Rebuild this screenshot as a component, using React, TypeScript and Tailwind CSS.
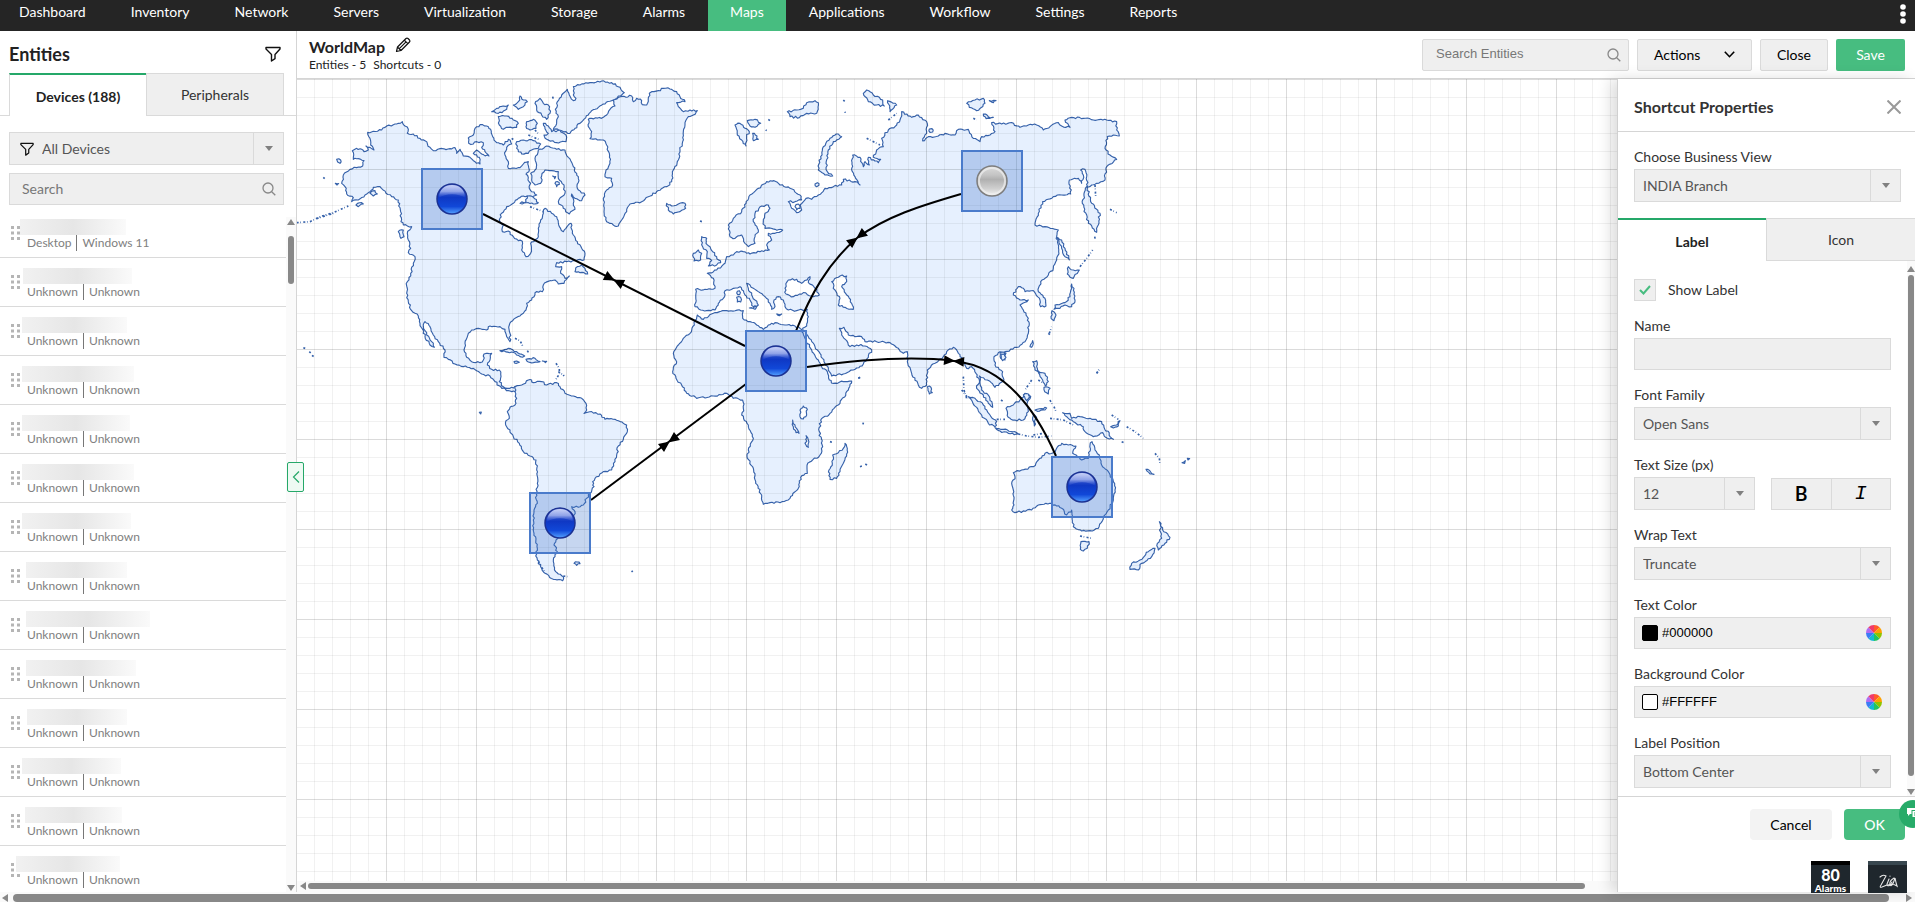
import type { ReactNode } from 'react'

type Point = [number, number]

const navItems = [
  'Dashboard',
  'Inventory',
  'Network',
  'Servers',
  'Virtualization',
  'Storage',
  'Alarms',
  'Maps',
  'Applications',
  'Workflow',
  'Settings',
  'Reports',
]

// names are masked, only the width of each mask differs
const devices = [
  { mask: 'w-[106px] ml-[-7px]', type: 'Desktop', os: 'Windows 11' },
  { mask: 'w-[109px] ml-[-4px]', type: 'Unknown', os: 'Unknown' },
  { mask: 'w-[105px] ml-[-5px]', type: 'Unknown', os: 'Unknown' },
  { mask: 'w-[112px] ml-[-5px]', type: 'Unknown', os: 'Unknown' },
  { mask: 'w-[108px] ml-[-5px]', type: 'Unknown', os: 'Unknown' },
  { mask: 'w-[112px] ml-[-5px]', type: 'Unknown', os: 'Unknown' },
  { mask: 'w-[109px] ml-[-5px]', type: 'Unknown', os: 'Unknown' },
  { mask: 'w-[101px] ml-[-1px]', type: 'Unknown', os: 'Unknown' },
  { mask: 'w-[124px] ml-[-1px]', type: 'Unknown', os: 'Unknown' },
  { mask: 'w-[110px] ml-[-1px]', type: 'Unknown', os: 'Unknown' },
  { mask: 'w-[100px]', type: 'Unknown', os: 'Unknown' },
  { mask: 'w-[99px] ml-[-5px]', type: 'Unknown', os: 'Unknown' },
  { mask: 'w-[97px] ml-[-2px]', type: 'Unknown', os: 'Unknown' },
  { mask: 'w-[104px] ml-[-11px]', type: 'Unknown', os: 'Unknown' },
]

// Coast lines, in thirds of a pixel, one list per map sheet
const northWest = [
  '185,395 190,383 170,372 165,350 155,340 160,315 180,298 200,293 218,288 222,272 205,266 190,268 187,242 200,235 215,238 222,245 235,240 228,228 240,232 252,240 242,225 240,205 233,187 250,184 275,180 290,168 310,164 325,160 337,155 345,168 355,178 352,190 370,192 390,205 405,212 420,232 430,242 450,236 480,236 495,233 500,250 510,238 520,258 540,262 555,275 570,282 568,262 550,250 560,240 575,252 597,258 585,245 575,232 580,218 560,215 550,222 536,220 535,204 550,195 555,175 570,164 590,168 602,178 608,200 620,218 640,225 655,208 665,222 650,232 645,255 655,275 655,295 690,293 700,282 715,275 718,300 708,312 722,340 718,355 740,375 722,380 700,378 685,385 670,400 650,410 635,430 628,450 640,465 637,485 655,483 670,500 685,512 697,514 695,540 708,560 722,550 722,520 735,512 745,500 745,475 752,450 760,430 765,415 785,430 800,440 808,470 820,485 835,465 843,460 850,495 862,515 875,535 885,550 882,570 855,572 830,575 800,578 797,590 815,590 812,610 825,625 838,618 830,628 822,640 805,642 795,630 780,632 760,645 757,665 735,668 725,690 710,700 708,720 690,738 668,752 658,765 660,790 660,815 650,800 645,778 630,770 600,768 590,780 565,775 545,780 535,790 525,820 522,840 530,862 545,875 570,878 580,870 582,852 605,850 600,870 592,885 605,898 628,900 633,920 628,935 640,950 660,955 680,948 690,955 676,965 655,962 635,955 615,935 600,918 575,912 550,895 520,890 495,882 475,868 462,862 465,840 445,815 430,795 420,770 405,755 400,770 410,795 425,815 433,832 420,825 405,800 398,778 390,760 385,738 365,722 355,695 350,670 352,635 362,610 370,580 375,560 355,548 362,535 355,510 352,490 365,470 340,465 333,455 332,425 325,390 305,380 288,370 270,350 250,352 240,365 225,375 205,390',
  '850,75 850,50 870,45 900,38 935,33 965,38 990,52 1003,68 985,78 965,92 945,102 925,112 905,122 895,135 870,160 855,175 840,190 815,182 790,178 800,155 805,140 798,130 800,100 815,75 832,58 838,75 850,92 858,85',
  '605,125 620,115 640,108 655,105 650,118 625,130',
  '670,105 685,95 690,78 700,90 712,95 700,110 685,118',
  '625,140 650,138 670,150 685,160 680,172 655,172 640,178 628,165',
  '735,100 750,85 760,100 775,105 780,130 770,148 755,135 740,120',
  '710,155 730,148 742,160 738,175 720,180 708,170',
  '760,160 775,168 785,185 810,180 828,195 828,215 800,218 770,208 762,195 775,190',
  '680,215 700,210 730,212 752,222 745,235 725,240 715,250 695,252 680,235',
  '735,265 745,240 770,228 800,238 825,240 835,262 850,290 865,320 862,355 885,375 875,392 855,385 845,372 850,400 855,418 842,425 838,432 820,415 805,395 825,370 822,345 805,325 805,305 785,302 765,300 755,318 752,340 735,345 725,330 722,310 735,300 740,285',
  '690,400 708,395 712,378 730,382 745,398 730,402 715,398',
  '862,590 875,585 885,595 893,612 870,608 855,605',
  '895,148 905,145 940,142 950,135 960,118 975,108 970,90 985,82 1025,78 1030,95 1040,85 1055,92 1057,104 1070,105 1078,70 1085,65 1105,62 1120,55 1140,57 1160,65 1170,80 1185,95 1160,98 1165,110 1180,125 1200,120 1222,122 1210,135 1195,140 1185,165 1180,185 1178,215 1170,240 1165,270 1150,300 1145,335 1130,350 1100,365 1075,380 1055,395 1020,402 1010,425 995,450 985,468 970,465 950,455 942,425 940,385 950,360 968,345 965,325 945,320 948,300 960,280 958,250 950,225 940,210 900,206 905,185 895,170',
  '1130,400 1145,408 1165,402 1185,400 1187,415 1170,425 1150,432 1135,420',
  '630,842 655,835 680,845 704,858 690,860 665,846',
  '708,868 735,865 750,875 730,878 715,876',
  '672,875 680,873 688,877 680,880',
  '757,873 770,874 766,878',
  '325,485 340,480 342,500 333,505',
  '795,340 803,335 808,343 800,350',
  '788,318 797,320 794,326',
  '140,268 152,270 150,280 143,276',
  '136,340 146,341 141,345',
  '240,370 255,362 262,372 250,378',
  '198,405 215,398 220,402 205,410',
]

const southWest = [
  '195,50 215,45 235,30 245,30 250,38 275,35 290,45 320,38 330,50 345,70 370,78 395,85 408,100 410,120 402,130 425,125 450,132 465,148 495,148 520,160 530,165 532,185 520,208 505,228 500,255 495,275 485,300 460,305 435,325 428,335 432,350 420,370 410,385 400,405 385,412 365,410 375,425 372,435 360,450 345,480 330,495 318,510 312,525 322,545 315,560 310,575 317,605 325,612 340,620 338,632 310,628 285,610 275,595 262,570 258,545 262,535 252,490 250,450 252,420 262,400 258,370 262,340 260,300 258,270 240,258 220,245 208,220 190,200 180,180 167,165 168,152 178,145 172,125 180,112 198,100 200,85 195,65',
  '1185,220 1192,235 1190,252 1180,280 1170,305 1160,325 1140,328 1137,300 1147,280 1148,255 1165,248 1180,235',
  '372,580 382,576 390,581 380,586',
  '88,127 94,126 92,132',
]

const northEast = [
  '-13,658 -15,710 2,720 20,722 45,720 55,700 70,685 75,662 100,655 120,650 130,662 135,675 150,690 160,710 175,705 165,690 155,675 145,655 140,640 150,645 160,655 180,668 195,680 210,700 215,718 225,710 222,690 235,680 250,690 255,710 265,720 290,722 322,718 325,740 320,768 308,775 325,800 345,830 360,850 375,880 388,905 395,918 430,912 460,900 490,882 505,862 515,840 495,828 470,825 450,830 440,812 425,795 418,775 432,772 445,795 465,800 485,800 495,815 530,815 570,818 595,835 610,850 622,845 622,875 635,910 655,945 665,955 680,945 682,900 705,880 730,860 740,845 760,832 775,850 790,875 800,895 815,890 828,910 838,930 830,955 850,975 865,1000 878,1012 868,980 845,960 840,940 838,918 862,930 885,952 912,930 908,905 885,885 882,860 900,845 915,845 950,832 975,815 985,790 985,745 970,720 960,705 985,690 960,690 940,675 955,650 970,655 975,665 1000,662 1020,690 1022,710 1038,708 1035,685 1015,665 1022,635 1045,615 1060,595 1070,570 1076,545 1070,500 1075,480 1035,470 1005,465 1015,430 1028,395 1060,380 1085,375 1112,372 1108,330 1135,325 1145,340 1150,315 1142,300 1155,298 1160,320 1162,355 1175,400 1200,430 1190,487 1165,460 1147,400 1160,350 1175,345 1190,340 1215,330 1218,300 1225,285 1250,268 1230,255 1215,235 1222,200 1240,195 1258,198 1250,180 1250,155 1220,150 1180,150 1150,145 1115,142 1095,150 1110,172 1085,168 1075,158 1050,170 1030,180 1010,165 985,165 960,172 935,158 905,162 875,158 885,185 870,195 845,200 840,215 820,205 805,178 775,178 765,195 735,190 715,198 685,200 668,213 680,190 680,155 655,135 635,142 605,125 600,150 590,165 565,180 545,205 550,230 530,240 520,262 542,268 535,278 505,262 508,285 495,275 490,290 480,262 458,255 455,300 465,320 480,345 465,335 430,328 425,345 400,350 375,355 355,375 335,388 318,385 300,405 305,420 290,428 275,415 265,395 285,395 305,390 300,375 270,355 240,345 222,332 200,335 175,355 150,375 138,400 125,425 100,445 85,465 90,500 105,505 125,495 135,520 145,530 165,520 165,500 175,480 160,455 165,430 185,408 205,405 210,415 195,430 190,455 195,475 225,478 248,480 225,490 205,490 215,510 200,525 208,540 180,545 150,552 130,545 110,545 100,555 80,560 75,580 50,600 22,610 40,625 45,655 15,658',
  // Africa
  '-8,735 10,748 40,730 80,722 130,722 128,745 150,755 170,765 190,778 205,765 225,758 255,765 285,768 300,775 305,785 318,810 335,840 355,870 365,890 382,905 388,930 400,940 430,935 455,933 445,960 420,1000 390,1030 362,1050 358,1085 368,1130 360,1155 323,1180 322,1210 302,1222 295,1255 270,1285 240,1298 210,1298 190,1303 185,1275 167,1240 160,1195 142,1165 145,1140 160,1105 145,1065 125,1035 130,1015 128,990 100,985 80,970 40,978 -10,985 -40,970 -55,945 -72,925 -82,905 -70,875 -80,850 -65,825 -50,805 -30,790 -17,765',
  '5,500 20,505 18,520 30,530 38,545 50,560 62,578 50,585 25,588 35,572 20,565 22,545 8,530',
  '-20,550 -5,540 5,550 2,570 -18,573',
  '105,165 120,160 135,175 148,185 140,200 138,228 125,210 112,195',
  '142,152 165,148 182,160 165,172 150,168',
  '158,190 166,195 175,208 160,212',
  '262,125 290,120 310,115 320,98 345,92 355,98 350,130 320,130 298,143 270,140',
  '355,300 362,260 370,230 390,205 415,192 425,200 400,215 385,240 378,280 382,305 398,318 375,315',
  '490,70 500,60 520,75 548,90 553,108 530,105 505,95',
  '563,92 590,105 570,125',
  '800,100 825,90 850,85 855,100 830,122 808,112',
  '868,92 888,92 880,98',
  '850,132 865,140 880,142 858,146',
  '682,950 688,948 697,968 688,972',
  '900,848 918,850 915,870 902,865',
  '990,830 998,812 1000,820 995,832',
  '1070,502 1085,510 1095,535 1108,570 1095,560 1085,535',
  '1115,642 1122,655 1125,690 1115,710 1095,705 1080,715 1062,718 1065,705 1095,698 1110,680',
  '1056,722 1068,735 1062,752 1053,740',
  '1105,590 1120,600 1138,600 1120,625 1102,612',
  '345,342 352,338 357,346 350,350',
  '688,177 696,176 698,186 690,187',
  '110,682 122,682 122,696 112,696',
  '112,664 118,662 119,674 113,674',
  '148,714 170,710 165,718',
  '230,732 245,732 238,737',
]

const inlandWater = [
  '255,655 265,630 290,628 305,640 330,620 325,638 345,655 358,675 335,678 310,668 280,680 258,672',
  '395,635 420,618 440,618 440,635 425,650 440,675 455,700 460,718 435,712 415,705 420,685 405,660',
  '300,1020 310,1008 322,1018 320,1035 310,1047 300,1040',
  '278,1050 285,1065 297,1090 288,1088 280,1070',
  '318,1097 325,1110 325,1132 318,1125',
  '285,410 295,402 300,415 290,420',
]

const southEast = [
  '205,200 225,205 250,225 270,255 290,275 285,290 265,280 245,255 230,232',
  '285,293 310,298 345,305 355,312 325,310 300,303',
  '318,235 340,225 360,210 375,190 392,200 380,225 385,245 370,270 345,270 325,262',
  '405,240 425,236 440,234 435,240 412,244',
  '400,252 410,262 405,270 403,288 398,270',
  '398,95 410,92 412,115 422,128 405,120',
  '415,128 435,130 445,155 436,168 428,150',
  '432,172 450,175 445,192 434,185',
  '370,195 385,192 392,200 380,212',
  '488,248 510,250 515,265 540,260 570,265 605,275 612,292 640,328 622,325 608,308 580,320 555,305 550,290 520,275 500,260',
  '632,290 650,285 660,272 655,288 640,294',
  '340,428 365,420 400,410 415,390 435,370 460,368 470,355 485,340 505,345 528,348 518,370 545,390 565,385 570,345 576,335 585,360 598,375 605,405 625,425 640,455 645,480 640,510 625,540 610,560 595,595 570,602 545,603 520,590 518,560 515,540 500,555 485,535 455,520 415,525 395,540 345,548 335,540 342,525 340,480 335,460 345,440',
  '543,635 567,635 562,655 550,663 541,658',
  '778,575 788,600 810,622 795,640 775,660 772,640 785,625',
  '765,655 755,680 725,700 715,720 690,718 695,700 720,690 745,665',
  '738,418 752,426 762,433 750,432',
  '846,398 856,392 854,400',
  '862,385 869,386 864,390',
  '303,72 315,70 318,82 308,92',
]

// dashed lines that stand for chains of small islands
const chains = {
  northWest:
    'M20,458 60,455 90,440 130,428 175,408 M80,446 130,430 M40,833 48,836 M58,845 62,849 M66,856 74,862 M675,805 690,812 698,828 M712,842 717,850 M798,880 808,895 808,912 798,928 M820,915 822,918 M100,322 104,326 M665,205 672,210 M715,195 750,210 M735,180 748,195 M788,80 790,88 M720,410 760,425 M1230,453 1236,455',
  northEast:
    'M1140,590 1160,565 1178,540 M1184,500 1186,508 M1185,345 1187,378 M1230,418 1250,428 M430,90 434,94 M435,125 436,128 M205,148 210,152 M197,180 200,182 M1048,790 1055,770 M500,205 540,225 M820,145 830,150 M565,150 590,130 M475,925 482,920 M1190,910 1196,900 M790,920 792,960 800,985',
  southEast:
    'M185,180 205,205 M355,312 380,318 415,322 455,318 M395,150 385,165 375,180 M462,230 468,245 M450,265 490,270 520,285 M680,290 705,305 730,325 M765,370 778,385 780,402 M303,210 310,215 M635,255 655,268 M450,210 456,222 M590,130 600,115 M665,335 672,338 M445,10 450,14 M540,618 575,625 M290,268 315,268 M415,150 430,160 M400,315 430,310',
  southWest:
    'M325,5 340,15 M545,602 548,606 M1230,290 1236,288 M1246,282 1252,286 M1237,160 1242,161 M1140,215 1150,218 M340,618 352,620 M1225,25 1232,22 M265,575 285,608',
}

// Splits every edge and pushes the new points off it, so coasts look rugged
function coast(list: string): string {
  let seed = list.length * 7919
  const next = () => {
    seed = (seed * 1103515245 + 12345) % 2147483648
    return seed / 2147483648 - 0.5
  }
  const points = list.split(' ').map((p) => p.split(',').map(Number) as Point)
  const out: string[] = []
  points.forEach(([x, y], i) => {
    const [nx, ny] = points[(i + 1) % points.length]
    const length = Math.hypot(nx - x, ny - y)
    const parts = Math.max(1, Math.round(length / 6))
    for (let k = 0; k < parts; k++) {
      const push = k === 0 ? 0 : next() * 6
      const px = x + ((nx - x) * k) / parts - ((ny - y) / (length || 1)) * push
      const py = y + ((ny - y) * k) / parts + ((nx - x) / (length || 1)) * push
      out.push(`${px.toFixed(1)} ${py.toFixed(1)}`)
    }
  })
  return `M${out.join('L')}Z`
}

interface SheetProps {
  x: number
  y: number
  lands: string[]
  chain: string
  water?: string[]
}

function Sheet({ x, y, lands, chain, water = [] }: SheetProps) {
  return (
    <g transform={`translate(${x} ${y}) scale(0.33333)`} stroke="#3561aa" strokeWidth="3.4" strokeLinejoin="round">
      {lands.map((land) => (
        <path key={land} d={coast(land)} fill="#e6f0fe" />
      ))}
      {water.map((lake) => (
        <path key={lake} d={coast(lake)} fill="#fff" />
      ))}
      <path d={chain} fill="none" strokeWidth="5" strokeDasharray="6 5 2 7" />
    </g>
  )
}

const sites = [
  { x: 124, y: 89, up: true },
  { x: 664, y: 71, up: false },
  { x: 448, y: 251, up: true },
  { x: 232, y: 413, up: true },
  { x: 754, y: 377, up: true },
]

const links = [
  { d: 'M186 135L448 267', x: 317, y: 201, turn: 26.7 },
  { d: 'M449 305L294 421', x: 372, y: 363, turn: -37 },
  { d: 'M499 252C513 217 530 185 560 159C590 137 623 127 664 115', x: 560, y: 159, turn: -38 },
  { d: 'M510 288C560 281 617 277 657 282C703 287 736 324 759 377', x: 657, y: 282, turn: 5 },
]

function WorldMap() {
  return (
    <svg className="block h-full w-full" role="img" aria-label="World map">
      <defs>
        <pattern id="minor" x="-1" y="0" width="18" height="18" patternUnits="userSpaceOnUse">
          <path d="M0.5 0V18M0 0.5H18" stroke="#000" strokeOpacity="0.055" />
        </pattern>
        <pattern id="major" x="-1" y="0" width="90" height="90" patternUnits="userSpaceOnUse">
          <path d="M0.5 0V90M0 0.5H90" stroke="#000" strokeOpacity="0.09" />
        </pattern>
        <linearGradient id="blueOrb" x1="0" y1="0" x2="0" y2="1">
          <stop offset="0" stopColor="#5f78d8" />
          <stop offset="0.45" stopColor="#0f38c4" />
          <stop offset="0.75" stopColor="#1148d8" />
          <stop offset="1" stopColor="#55a2ff" />
        </linearGradient>
        <linearGradient id="blueShine" x1="0" y1="0" x2="0" y2="1">
          <stop offset="0" stopColor="#d5dcfa" stopOpacity="0.9" />
          <stop offset="0.5" stopColor="#b9c5f4" stopOpacity="0.7" />
          <stop offset="1" stopColor="#5571dc" stopOpacity="0" />
        </linearGradient>
        <linearGradient id="greyOrb" x1="0" y1="0" x2="0" y2="1">
          <stop offset="0" stopColor="#dcdcdc" />
          <stop offset="0.3" stopColor="#c4c4c4" />
          <stop offset="0.45" stopColor="#b0b0b0" />
          <stop offset="0.75" stopColor="#cfcfcf" />
          <stop offset="1" stopColor="#f4f4f4" />
        </linearGradient>
      </defs>
      <Sheet x={-7} y={-9} lands={northWest} chain={chains.northWest} />
      <Sheet x={153} y={291} lands={southWest} chain={chains.southWest} />
      <Sheet x={403} y={-9} lands={northEast} chain={chains.northEast} water={inlandWater} />
      <Sheet x={603} y={251} lands={southEast} chain={chains.southEast} />
      <rect width="100%" height="100%" fill="url(#minor)" />
      <rect width="100%" height="100%" fill="url(#major)" />

      {links.map((link) => (
        <g key={link.d}>
          <path d={link.d} fill="none" stroke="#000" strokeWidth="2" />
          <path d="M1 0L-10 -5V5ZM-1 0L10 -5V5Z" transform={`translate(${link.x} ${link.y}) rotate(${link.turn})`} />
        </g>
      ))}

      {sites.map((s) => (
        <g key={`${s.x}-${s.y}`} transform={`translate(${s.x} ${s.y})`}>
          <rect x="1" y="1" width="60" height="60" fill="#487acd" fillOpacity="0.31" stroke="#4a7bcb" strokeWidth="2" />
          <circle cx="31" cy="31" r="15" fill={s.up ? 'url(#blueOrb)' : 'url(#greyOrb)'} stroke={s.up ? '#1b3192' : '#7d7d7d'} strokeWidth="1.5" />
          {s.up ? (
            <path d="M18 30C18 21 24 17 31 17S44 21 44 30C38 25 24 25 18 30Z" fill="url(#blueShine)" />
          ) : (
            <circle cx="31" cy="31" r="13" fill="none" stroke="#f0f0f0" strokeOpacity="0.7" strokeWidth="2" />
          )}
        </g>
      ))}
    </svg>
  )
}

function FunnelIcon({ className }: { className: string }) {
  return (
    <svg className={className} viewBox="0 0 16 16" fill="none" stroke="#111" strokeWidth="1.4" strokeLinejoin="round">
      <path d="M1 1.5H15V3L10 8.500V12.700L6.500 15V8.500L1 3Z" />
    </svg>
  )
}

function SearchIcon() {
  return (
    <svg className="h-[14px] w-[14px] shrink-0" viewBox="0 0 14 14" fill="none" stroke="#888" strokeWidth="1.3">
      <circle cx="6" cy="6" r="5" />
      <path d="M9.7 9.7L13.3 13.3" />
    </svg>
  )
}

function PencilIcon() {
  return (
    <svg className="h-4 w-4" viewBox="0 0 16 16" fill="none" stroke="#111" strokeWidth="1.2" strokeLinejoin="round">
      <path d="M1.5 14.5L2.5 10L11 1.5Q12 0.7 13 1.5L14.5 3Q15.3 4 14.5 5L6 13.5ZM2.5 10L6 13.5M9.3 3.2L12.8 6.7M4.3 11.7L10.8 5.2" />
    </svg>
  )
}

function ColorWheel() {
  const colors = ['#ff5a2a', '#ffa000', '#8fc400', '#22c55e', '#14b8d4', '#3b7cf5', '#b06cf0', '#f03a6a']
  return (
    <svg className="h-4 w-4" viewBox="-8 -8 16 16">
      {colors.map((c, i) => (
        <path key={c} d="M0 0L0 -8A8 8 0 0 1 5.657 -5.657Z" fill={c} transform={`rotate(${i * 45})`} />
      ))}
    </svg>
  )
}

const arrowShape = {
  up: 'M4 1L8 7H0Z',
  down: 'M4 7L8 1H0Z',
  left: 'M1 4L7 0V8Z',
  right: 'M7 4L1 0V8Z',
}

function ScrollArrow({ to }: { to: keyof typeof arrowShape }) {
  return (
    <svg className="h-2 w-2 shrink-0" viewBox="0 0 8 8" fill="#888">
      <path d={arrowShape[to]} />
    </svg>
  )
}

function Picker({ id, label, value, children }: { id: string; label: string; value: string; children?: ReactNode }) {
  return (
    <div className="relative flex h-[33px] border border-[#dadada] bg-[#efefef] text-[#555]">
      {children}
      <select id={id} aria-label={label} className="min-w-0 flex-1 appearance-none bg-transparent pl-2 pr-8 outline-none" defaultValue={value}>
        <option>{value}</option>
      </select>
      <span className="pointer-events-none absolute inset-y-0 right-0 flex w-[30px] items-center justify-center border-l border-[#dadada]">
        <svg className="h-[5px] w-2" viewBox="0 0 8 5" fill="#808080">
          <path d="M0 0H8L4 5Z" />
        </svg>
      </span>
    </div>
  )
}

function Field({ id, label, children }: { id: string; label: string; children: ReactNode }) {
  return (
    <div>
      <label htmlFor={id} className="mb-0.5 block leading-5">
        {label}
      </label>
      {children}
    </div>
  )
}

function ColorField({ id, label, value, swatch }: { id: string; label: string; value: string; swatch: string }) {
  return (
    <Field id={id} label={label}>
      <div className="flex h-8 items-center gap-1 border border-[#dadada] bg-[#efefef] pl-[7px] pr-2">
        <span className={`h-4 w-4 rounded-xs border border-black ${swatch}`} />
        <input
          id={id}
          className="min-w-0 flex-1 bg-transparent font-['Liberation_Sans',sans-serif] text-[13px] text-black outline-none"
          defaultValue={value}
        />
        <ColorWheel />
      </div>
    </Field>
  )
}

function Sidebar() {
  return (
    <aside className="relative flex w-[297px] shrink-0 flex-col border-r border-[#d5d5d5]">
      <div className="flex h-[42px] items-center justify-between pl-[9px] pr-[15px] pt-1">
        <h1 className="text-lg font-bold text-[#222]">Entities</h1>
        <button aria-label="Filter entities">
          <FunnelIcon className="h-4 w-4" />
        </button>
      </div>
      <div className="flex h-[43px]">
        <span className="w-[9px] border-b border-[#dadada]" />
        <button className="flex-1 border-l border-t-2 border-l-[#dadada] border-t-[#25a869] pt-0.5 font-bold text-[#222]">Devices (188)</button>
        <button className="flex-1 border border-[#dadada] bg-[#efefef]">Peripherals</button>
        <span className="w-3 border-b border-[#dadada]" />
      </div>
      <div className="flex flex-col gap-2 pb-1 pl-[9px] pr-3 pt-4">
        <Picker id="device-filter" label="Device filter" value="All Devices">
          <span className="flex items-center pl-2.5">
            <FunnelIcon className="h-[14px] w-[14px]" />
          </span>
        </Picker>
        <div className="flex h-8 items-center border border-[#dadada] bg-[#efefef] pl-3 pr-[7px]">
          <input aria-label="Search devices" placeholder="Search" className="min-w-0 flex-1 bg-transparent outline-none placeholder:text-[#777]" />
          <SearchIcon />
        </div>
      </div>
      <div className="flex min-h-0 flex-1">
        <ul className="min-w-0 flex-1 overflow-hidden text-xs text-[#808080]">
          {devices.map((d, i) => (
            <li key={i} className="flex h-[49px] items-center gap-[7px] border-b border-[#dadada] pl-[11px]">
              <svg className="h-[14px] w-[9px] shrink-0" viewBox="0 0 9 14" fill="#b5b5b5">
                <path d="M0 0H3V3H0ZM6 0H9V3H6ZM0 5.5H3V8.5H0ZM6 5.5H9V8.5H6ZM0 11H3V14H0ZM6 11H9V14H6Z" />
              </svg>
              <div className="pt-1">
                <div className={`h-4 bg-linear-to-r from-[#f1f1f1] via-[#e6e6e6] to-[#fafafa] ${d.mask}`} />
                <p className="flex h-4 items-center leading-4">
                  {d.type}
                  <span className="mx-[5px] h-4 w-px bg-[#777]" />
                  {d.os}
                </p>
              </div>
            </li>
          ))}
        </ul>
        <div className="mt-2 flex w-[10px] flex-col items-center bg-[#fafafa] pt-px">
          <ScrollArrow to="up" />
          <span className="mt-2.5 h-12 w-1.5 rounded-full bg-[#888]" />
          <span className="flex-1" />
          <ScrollArrow to="down" />
        </div>
      </div>
      <button
        aria-label="Collapse entities"
        className="absolute -right-2 top-[431px] z-10 flex h-[30px] w-[17px] items-center justify-center rounded-xs border border-[#25a869] bg-[#eefaf3]"
      >
        <svg className="h-3 w-2" viewBox="0 0 8 12" fill="none" stroke="#25a869" strokeWidth="1.2">
          <path d="M7 0.5L1.5 6L7 11.5" />
        </svg>
      </button>
    </aside>
  )
}

function Toolbar() {
  return (
    <header className="flex h-12 shrink-0 items-center border-b border-[#d5d5d5] pl-3 pr-[10px]">
      <div className="flex-1">
        <div className="flex items-center gap-2.5">
          <h2 className="text-base font-bold leading-5 text-[#222]">WorldMap</h2>
          <button aria-label="Rename map" className="pb-1">
            <PencilIcon />
          </button>
        </div>
        <p className="flex gap-[7px] text-xs leading-4 text-[#222]">
          <span>Entities - 5</span>
          <span>Shortcuts - 0</span>
        </p>
      </div>
      <div className="flex h-8 gap-2 text-black">
        <div className="flex w-[207px] items-center rounded-xs border border-[#dadada] bg-[#efefef] pl-[13px] pr-[7px]">
          <input
            aria-label="Search entities"
            placeholder="Search Entities"
            className="min-w-0 flex-1 bg-transparent font-['Liberation_Sans',sans-serif] text-[13px] outline-none placeholder:text-[#777]"
          />
          <SearchIcon />
        </div>
        <button className="flex w-[115px] items-center justify-between rounded-xs border border-[#dadada] bg-[#efefef] px-4">
          Actions
          <svg className="h-[7px] w-[11px]" viewBox="0 0 11 7" fill="none" stroke="#000" strokeWidth="1.6">
            <path d="M0.8 0.8L5.5 5.7L10.2 0.8" />
          </svg>
        </button>
        <button className="w-[68px] rounded-xs border border-[#dadada] bg-[#efefef]">Close</button>
        <button className="w-[69px] rounded-xs bg-[#47bd80] text-white">Save</button>
      </div>
    </header>
  )
}

function PropertiesPanel() {
  return (
    <section className="absolute inset-y-0 right-0 flex w-[298px] flex-col border-l border-[#d0d0d0] bg-white shadow-[-6px_0_14px_rgba(0,0,0,0.14)]">
      <div className="flex h-[53px] shrink-0 items-center justify-between border-b border-[#d5d5d5] pl-4 pr-[14px] pt-1">
        <h2 className="text-base font-bold text-[#333]">Shortcut Properties</h2>
        <button aria-label="Close panel">
          <svg className="h-[14px] w-[14px]" viewBox="0 0 14 14" stroke="#999" strokeWidth="2">
            <path d="M0.5 0.5L13.5 13.5M13.5 0.5L0.5 13.5" />
          </svg>
        </button>
      </div>
      <div className="pb-4 pl-4 pr-[14px] pt-[15px]">
        <Field id="view" label="Choose Business View">
          <Picker id="view" label="Choose Business View" value="INDIA Branch" />
        </Field>
      </div>
      <div className="flex h-[43px] shrink-0">
        <button className="flex-1 border-t-2 border-[#25a869] pt-0.5 font-bold text-[#222]">Label</button>
        <button className="flex-1 border border-r-0 border-[#dadada] bg-[#efefef]">Icon</button>
      </div>
      <div className="flex min-h-0 flex-1">
        <form className="flex min-w-0 flex-1 flex-col gap-[15px] overflow-hidden pl-4 pr-4 pt-[18px]">
          <label className="flex h-[22px] items-center gap-3">
            <span className="relative flex h-[22px] w-[22px]">
              <input type="checkbox" defaultChecked className="h-full w-full appearance-none border border-[#dadada] bg-[#efefef]" />
              <svg className="pointer-events-none absolute left-[5px] top-1.5 h-[10px] w-3" viewBox="0 0 12 10" fill="none" stroke="#47bd80" strokeWidth="2">
                <path d="M1 5L4.5 8.5L11 1" />
              </svg>
            </span>
            Show Label
          </label>
          <Field id="name" label="Name">
            <input id="name" className="block h-8 w-full border border-[#dadada] bg-[#efefef] px-2 outline-none" />
          </Field>
          <Field id="font" label="Font Family">
            <Picker id="font" label="Font Family" value="Open Sans" />
          </Field>
          <div className="flex items-end gap-4">
            <div className="w-[121px]">
              <Field id="size" label="Text Size (px)">
                <Picker id="size" label="Text Size" value="12" />
              </Field>
            </div>
            <div className="flex h-8 flex-1 border border-[#dadada] bg-[#efefef] text-xl leading-5 text-black">
              <button type="button" aria-label="Bold" className="flex-1 font-['Roboto',sans-serif] font-medium">
                B
              </button>
              <button type="button" aria-label="Italic" className="flex-1 border-l border-[#dadada] font-['Liberation_Mono',monospace] italic">
                I
              </button>
            </div>
          </div>
          <Field id="wrap" label="Wrap Text">
            <Picker id="wrap" label="Wrap Text" value="Truncate" />
          </Field>
          <ColorField id="text-color" label="Text Color" value="#000000" swatch="bg-black" />
          <ColorField id="bg-color" label="Background Color" value="#FFFFFF" swatch="bg-white" />
          <Field id="position" label="Label Position">
            <Picker id="position" label="Label Position" value="Bottom Center" />
          </Field>
        </form>
        <div className="flex w-2 flex-col items-center bg-[#fafafa] pt-1">
          <ScrollArrow to="up" />
          <span className="mb-3 mt-0.5 w-1.5 flex-1 rounded-full bg-[#888]" />
          <ScrollArrow to="down" />
        </div>
      </div>
      <footer className="relative h-24 shrink-0 border-t border-[#d5d5d5]">
        <div className="flex h-[43px] items-end justify-end gap-3 pr-[10px]">
          <button className="h-[31px] w-[82px] rounded-sm bg-[#f3f3f3] text-black">Cancel</button>
          <button className="h-[31px] w-[61px] rounded-sm bg-[#47bd80] font-medium text-white">OK</button>
        </div>
        <button aria-label="Chat" className="absolute -right-3 top-[3px] h-7 w-7 rounded-full bg-[#27ab69]">
          <svg className="absolute left-2 top-[7px] h-3 w-[14px]" viewBox="0 0 14 12" fill="#fff">
            <path d="M0 1H10V3H4.500V7H3L1 9V7H0Z" />
            <path d="M5.500 4H13V10H12V12L10 10H5.500Z" />
            <path d="M7 6H12M7 8H12" stroke="#27ab69" />
          </svg>
        </button>
        <div className="flex justify-end gap-[18px] pr-2 pt-[21px] text-white">
          <button className="h-8 w-[39px] border-t-4 border-black bg-[#1f272d] text-center font-black">
            <span className="block text-base leading-[17px]">80</span>
            <span className="block text-[10px] leading-[10px]">Alarms</span>
          </button>
          <button aria-label="Zia" className="h-8 w-[39px] border-t-4 border-[#38474f] bg-[#1f272d]">
            <svg className="mx-auto mt-1 h-4 w-5" viewBox="0 0 20 16" fill="none" stroke="#e8e8e8" strokeWidth="1.1" strokeLinecap="round">
              <path d="M2 4Q5 1 8 3L3 12Q1 15 4 14L9 12" />
              <path d="M11 6L9 11Q9 14 12 12L14 9M12 3V3.2" />
              <path d="M16 5Q11 8 12 12Q14 15 17 5Q18 10 19 13Q15 10 10 12" />
            </svg>
          </button>
        </div>
      </footer>
    </section>
  )
}

export default function App() {
  return (
    <div className="flex h-screen flex-col overflow-hidden bg-white font-['Lato',sans-serif] text-sm text-[#333]">
      <nav className="flex h-[31px] shrink-0 items-center justify-between bg-[#252525] pr-[9px]">
        <div className="-ml-[3px] flex h-full gap-px">
          {navItems.map((item) => (
            <a key={item} href="#" className={`px-[22px] leading-6 text-white ${item === 'Maps' ? 'bg-[#47bd80]' : ''}`}>
              {item}
            </a>
          ))}
        </div>
        <button aria-label="More" className="pb-1">
          <svg className="h-5 w-1.5" viewBox="0 0 6 20" fill="#fff">
            <circle cx="3" cy="3" r="2.8" />
            <circle cx="3" cy="10" r="2.8" />
            <circle cx="3" cy="17" r="2.8" />
          </svg>
        </button>
      </nav>
      <div className="flex min-h-0 flex-1">
        <Sidebar />
        <main className="flex min-w-0 flex-1 flex-col">
          <Toolbar />
          <div className="relative flex min-h-0 flex-1 flex-col">
            <div className="min-h-0 flex-1">
              <WorldMap />
            </div>
            <div className="flex h-[11px] items-center gap-px bg-[#fafafa] pb-px pl-0.5">
              <ScrollArrow to="left" />
              <span className="mr-[330px] h-1.5 flex-1 rounded-full bg-[#888]" />
            </div>
            <PropertiesPanel />
          </div>
        </main>
      </div>
      <div className="flex h-[10px] shrink-0 items-center gap-1 bg-[#fafafa] pl-px pr-0.5 pt-0.5">
        <ScrollArrow to="left" />
        <span className="mr-3 h-2 flex-1 rounded-full bg-[#888]" />
        <ScrollArrow to="right" />
      </div>
    </div>
  )
}
